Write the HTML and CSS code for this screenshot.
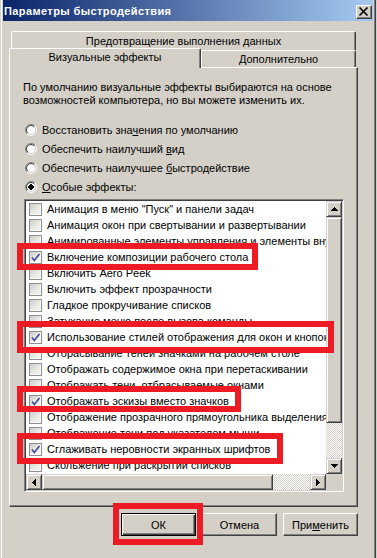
FILE: index.html
```html
<!DOCTYPE html>
<html lang="ru">
<head>
<meta charset="utf-8">
<title>Параметры быстродействия</title>
<link rel="stylesheet" href="styles.css">
</head>
<body>
<div class="window">
  <div class="titlebar">
    <span class="title">Параметры быстродействия</span>
    <span class="close"><svg width="14" height="12" viewBox="0 0 14 12"><path d="M2.5 1.5 L10.5 9.5 M10.5 1.5 L2.5 9.5" stroke="#000" stroke-width="1.7" fill="none"/></svg></span>
  </div>

  <div class="tabs">
    <div class="tabrow-back"><div class="tab tab-back">Предотвращение выполнения данных</div></div>
    <div class="tabrow-front">
      <div class="tab tab-sel">Визуальные эффекты</div>
      <div class="tab tab-front">Дополнительно</div>
    </div>
  </div>

  <div class="panel">
    <p class="desc">По умолчанию визуальные эффекты выбираются на основе<br>возможностей компьютера, но вы можете изменить их.</p>
    <div class="radios">
      <div class="radio"><svg class="rb" width="12" height="12" viewBox="0 0 12 12"><defs><linearGradient id="g1" gradientUnits="userSpaceOnUse" x1="0" y1="0" x2="12" y2="12"><stop offset="0.5" stop-color="#808080"/><stop offset="0.5" stop-color="#ffffff"/></linearGradient><linearGradient id="g2" gradientUnits="userSpaceOnUse" x1="0" y1="0" x2="12" y2="12"><stop offset="0.5" stop-color="#404040"/><stop offset="0.5" stop-color="#d4d0c8"/></linearGradient></defs><circle cx="6" cy="6" r="5.5" fill="none" stroke="url(#g1)"/><circle cx="6" cy="6" r="4.5" fill="#fff" stroke="url(#g2)"/></svg><span>Восстановить зна<u>ч</u>ения по умолчанию</span></div>
      <div class="radio"><svg class="rb" width="12" height="12" viewBox="0 0 12 12"><circle cx="6" cy="6" r="5.5" fill="none" stroke="url(#g1)"/><circle cx="6" cy="6" r="4.5" fill="#fff" stroke="url(#g2)"/></svg><span>Обеспечить наилучший <u>в</u>ид</span></div>
      <div class="radio"><svg class="rb" width="12" height="12" viewBox="0 0 12 12"><circle cx="6" cy="6" r="5.5" fill="none" stroke="url(#g1)"/><circle cx="6" cy="6" r="4.5" fill="#fff" stroke="url(#g2)"/></svg><span>Обеспечить наилучшее <u>б</u>ыстродействие</span></div>
      <div class="radio"><svg class="rb" width="12" height="12" viewBox="0 0 12 12"><circle cx="6" cy="6" r="5.5" fill="none" stroke="url(#g1)"/><circle cx="6" cy="6" r="4.5" fill="#fff" stroke="url(#g2)"/><rect x="4" y="4" width="4" height="4" fill="#000"/><rect x="5" y="3" width="2" height="6" fill="#000"/><rect x="3" y="5" width="6" height="2" fill="#000"/></svg><span><u>О</u>собые эффекты:</span></div>
    </div>

    <div class="list">
      <div class="items">
        <div class="row"><span class="cb"></span><span>Анимация в меню "Пуск" и панели задач</span></div>
        <div class="row"><span class="cb"></span><span>Анимация окон при свертывании и развертывании</span></div>
        <div class="row"><span class="cb"></span><span>Анимированные элементы управления и элементы внутри окна</span></div>
        <div class="row"><span class="cb"><svg width="11" height="11" viewBox="0 0 11 11"><path d="M2 5.5 L4.3 8.5 L9.5 2" stroke="#3c4c9e" stroke-width="1.6" fill="none"/></svg></span><span>Включение композиции рабочего стола</span></div>
        <div class="row"><span class="cb"></span><span>Включить Aero Peek</span></div>
        <div class="row"><span class="cb"></span><span>Включить эффект прозрачности</span></div>
        <div class="row"><span class="cb"></span><span>Гладкое прокручивание списков</span></div>
        <div class="row"><span class="cb"></span><span>Затухание меню после вызова команды</span></div>
        <div class="row"><span class="cb"><svg width="11" height="11" viewBox="0 0 11 11"><path d="M2 5.5 L4.3 8.5 L9.5 2" stroke="#3c4c9e" stroke-width="1.6" fill="none"/></svg></span><span>Использование стилей отображения для окон и кнопок</span></div>
        <div class="row"><span class="cb"></span><span>Отбрасывание теней значками на рабочем столе</span></div>
        <div class="row"><span class="cb"></span><span>Отображать содержимое окна при перетаскивании</span></div>
        <div class="row"><span class="cb"></span><span>Отображать тени, отбрасываемые окнами</span></div>
        <div class="row"><span class="cb"><svg width="11" height="11" viewBox="0 0 11 11"><path d="M2 5.5 L4.3 8.5 L9.5 2" stroke="#3c4c9e" stroke-width="1.6" fill="none"/></svg></span><span>Отображать эскизы вместо значков</span></div>
        <div class="row"><span class="cb"></span><span>Отображение прозрачного прямоугольника выделения</span></div>
        <div class="row"><span class="cb"></span><span>Отображение тени под указателем мыши</span></div>
        <div class="row"><span class="cb"><svg width="11" height="11" viewBox="0 0 11 11"><path d="M2 5.5 L4.3 8.5 L9.5 2" stroke="#3c4c9e" stroke-width="1.6" fill="none"/></svg></span><span>Сглаживать неровности экранных шрифтов</span></div>
        <div class="row"><span class="cb"></span><span>Скольжение при раскрытии списков</span></div>
      </div>
      <div class="vscroll">
        <div class="sbtn"><svg width="7" height="4" viewBox="0 0 7 4"><path d="M3 0h1v1h-1z M2 1h3v1h-3z M1 2h5v1h-5z M0 3h7v1h-7z" fill="#000"/></svg></div>
        <div class="thumb vthumb"></div>
        <div class="track"></div>
        <div class="sbtn"><svg width="7" height="4" viewBox="0 0 7 4"><path d="M0 0h7v1h-7z M1 1h5v1h-5z M2 2h3v1h-3z M3 3h1v1h-1z" fill="#000"/></svg></div>
      </div>
      <div class="hscroll">
        <div class="sbtn"><svg width="4" height="7" viewBox="0 0 4 7"><path d="M0 3h1v1h-1z M1 2h1v3h-1z M2 1h1v5h-1z M3 0h1v7h-1z" fill="#000"/></svg></div>
        <div class="thumb hthumb"></div>
        <div class="track"></div>
        <div class="sbtn"><svg width="4" height="7" viewBox="0 0 4 7"><path d="M0 0h1v7h-1z M1 1h1v5h-1z M2 2h1v3h-1z M3 3h1v1h-1z" fill="#000"/></svg></div>
      </div>
      <div class="corner"></div>
    </div>
  </div>

  <div class="buttons">
    <div class="btn btn-default">ОК</div>
    <div class="btn">Отмена</div>
    <div class="btn">При<u>м</u>енить</div>
  </div>

  <div class="mark mark-1"></div>
  <div class="mark mark-2"></div>
  <div class="mark mark-3"></div>
  <div class="mark mark-4"></div>
  <div class="mark mark-5"></div>
</div>
</body>
</html>
```

FILE: styles.css
```css
* { box-sizing: border-box; }
html, body { margin: 0; padding: 0; background: #d4d0c8; }
body {
  font-family: "Liberation Sans", Arial, sans-serif;
  font-size: 11px;
  color: #000;
}
.window {
  position: relative;
  width: 377px;
  height: 558px;
  overflow: hidden;
  padding: 0 4px 0 3px;
  background: #d4d0c8;
  box-shadow: inset 1px 0 0 #d4d0c8, inset 2px 0 0 #ffffff,
              inset -1px 0 0 #d4d0c8, inset -2px 0 0 #404040, inset -3px 0 0 #808080;
}

/* title bar */
.titlebar {
  height: 21px;
  display: flex;
  justify-content: space-between;
  align-items: flex-start;
  background: linear-gradient(to right, #0a246a, #a6caf0);
  color: #fff;
  font-weight: bold;
  padding-right: 1px;
}
.title { line-height: 13px; padding-top: 5px; padding-left: 1px; letter-spacing: 0.4px; }
.close {
  width: 16px;
  height: 14px;
  margin-top: 5px;
  background: #d4d0c8;
  border: 1px solid;
  border-color: #ffffff #404040 #404040 #ffffff;
  box-shadow: inset -1px -1px 0 #808080;
  display: flex;
}

/* tabs */
.tabs {
  margin: 10px 0 0 6px;
  width: 349px;
  position: relative;
  z-index: 1;
}
.tab {
  background: #d4d0c8;
  text-align: center;
  line-height: 13px;
  border-top: 1px solid #ffffff;
  border-left: 1px solid #ffffff;
  border-right: 1px solid #404040;
  box-shadow: inset -1px 0 0 #808080;
  border-radius: 2px 2px 0 0;
  white-space: nowrap;
}
.tabrow-back { height: 19px; padding-left: 2px; }
.tab-back { width: 345px; height: 19px; padding-top: 3px; }
.tabrow-front {
  display: flex;
  align-items: flex-end;
  height: 19px;
  margin-top: -2px;
}
.tab-sel { width: 192px; height: 20px; margin-bottom: -1px; padding-top: 2px; }
.tab-front { width: 155px; height: 17px; padding-top: 2px; }

/* panel */
.panel {
  margin-left: 6px;
  width: 349px;
  height: 440px;
  border-top: 1px solid #ffffff;
  border-left: 1px solid #ffffff;
  border-right: 1px solid #404040;
  border-bottom: 1px solid #404040;
  box-shadow: inset -1px -1px 0 #808080;
  padding: 13px 0 0 13px;
}
.desc { margin: 0; line-height: 13px; white-space: nowrap; }
.radios { margin-top: 13px; }
.radio {
  display: flex;
  align-items: center;
  gap: 5px;
  height: 19px;
  margin-left: 2px;
}
.rb { display: block; flex: none; }

/* list */
.list {
  margin: 3px 0 0 1px;
  width: 320px;
  height: 293px;
  border: 1px solid;
  border-color: #808080 #ffffff #ffffff #808080;
  padding: 1px;
  box-shadow: inset 1px 1px 0 #404040, inset -1px -1px 0 #d4d0c8;
  background: #fff;
  display: grid;
  grid-template-columns: 300px 16px;
  grid-template-rows: 273px 16px;
}
.items { overflow: hidden; background: #fff; }
.row {
  height: 16px;
  display: flex;
  align-items: center;
  padding-left: 3px;
  white-space: nowrap;
  line-height: 13px;
}
.cb {
  flex: none;
  width: 13px;
  height: 13px;
  margin-right: 5px;
  border: 1px solid #8e8f8f;
  background: linear-gradient(135deg, #cdcdc9 0%, #e9e9e6 55%, #f8f8f7 100%);
  box-shadow: inset -1px -1px 0 #fbfbfb;
  display: flex;
}
.cb svg { display: block; }

.vscroll { display: flex; flex-direction: column; background: #d4d0c8; }
.hscroll { display: flex; background: #d4d0c8; }
.sbtn, .thumb {
  background: #d4d0c8;
  border: 1px solid;
  border-color: #d4d0c8 #404040 #404040 #d4d0c8;
  box-shadow: inset 1px 1px 0 #ffffff, inset -1px -1px 0 #808080;
}
.sbtn {
  flex: none;
  width: 16px;
  height: 16px;
  display: flex;
  align-items: center;
  justify-content: center;
}
.sbtn svg { display: block; }
.vthumb { flex: none; height: 206px; }
.hthumb { flex: none; width: 231px; }
.track {
  flex: 1;
  background-color: #ffffff;
  background-image: conic-gradient(#d4d0c8 25%, #ffffff 0 50%, #d4d0c8 0 75%, #ffffff 0);
  background-size: 2px 2px;
}
.corner { background: #d4d0c8; }

/* buttons */
.buttons {
  display: flex;
  justify-content: flex-end;
  gap: 6px;
  margin-top: 6px;
  padding-right: 15px;
}
.btn {
  width: 75px;
  height: 23px;
  display: flex;
  align-items: center;
  justify-content: center;
  background: #d4d0c8;
  border: 1px solid;
  border-color: #ffffff #404040 #404040 #ffffff;
  box-shadow: inset -1px -1px 0 #808080;
}
.btn-default {
  border-color: #000;
  box-shadow: inset 1px 1px 0 #ffffff, inset -1px -1px 0 #404040, inset -2px -2px 0 #808080;
}

/* red highlight marks drawn over the screenshot */
.mark {
  position: absolute;
  border: 6px solid #ed1c24;
  z-index: 5;
}
.mark-1 { left: 17px; top: 243px; width: 241px; height: 27px; }
.mark-2 { left: 17px; top: 321px; width: 317px; height: 32px; }
.mark-3 { left: 17px; top: 386px; width: 224px; height: 26px; }
.mark-4 { left: 17px; top: 433px; width: 266px; height: 31px; }
.mark-5 { left: 113px; top: 503px; width: 90px; height: 42px; }
```
